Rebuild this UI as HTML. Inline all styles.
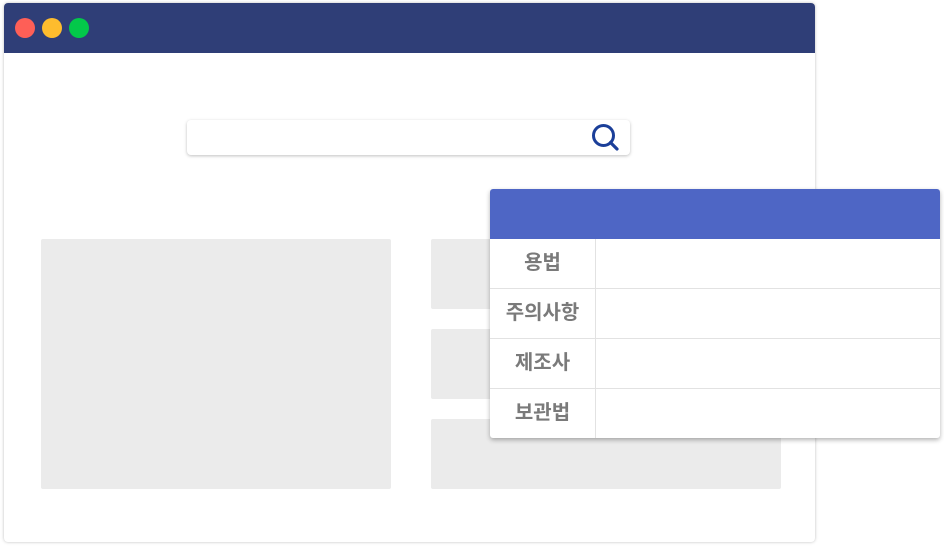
<!DOCTYPE html><html><head><meta charset="utf-8"><style>
body{margin:0;width:944px;height:547px;background:#fff;position:relative;overflow:hidden;font-family:"Liberation Sans","Noto Sans CJK KR",sans-serif}
.a{position:absolute}
.win{left:4px;top:3px;width:811px;height:539px;background:#fff;border-radius:4px;box-shadow:0 0 3px rgba(0,0,0,.25);overflow:hidden}
.hd{left:0;top:0;width:811px;height:50px;background:#2f3e77}
.dot{width:20px;height:20px;border-radius:50%;top:15px}
.g{background:#ebebeb;border-radius:2px}
.panel{left:490px;top:189px;width:450px;height:249px;background:#fff;border-radius:3px;box-shadow:0 2px 5px rgba(0,0,0,.3);overflow:hidden}
.ph{left:0;top:0;width:450px;height:50px;background:#4e66c5}
.row{left:0;width:450px;height:49px;border-top:1px solid #e2e2e2}
.lab{position:absolute;left:0;width:105px;height:49px;line-height:49px;text-align:center;border-right:1px solid #e2e2e2;font-weight:bold;font-size:20px;color:#7a7a7a}
</style></head><body>
<div class="a win">
<div class="a hd"></div>
<div class="a dot" style="left:11px;background:#fe5f57"></div>
<div class="a dot" style="left:38px;background:#febc2e"></div>
<div class="a dot" style="left:65px;background:#03c84a"></div>
<div class="a" style="left:183px;top:117px;width:443px;height:35px;border-radius:4px;box-shadow:0 1px 3px rgba(0,0,0,.25);background:#fff"></div>
<svg class="a" style="left:585px;top:118px" width="34" height="34"><circle cx="14.5" cy="14.5" r="10" fill="none" stroke="#1b3f99" stroke-width="3"/><line x1="21.5" y1="21.5" x2="28" y2="28" stroke="#1b3f99" stroke-width="3.2" stroke-linecap="round"/></svg>
<div class="a g" style="left:37px;top:236px;width:350px;height:250px"></div>
<div class="a g" style="left:427px;top:236px;width:350px;height:70px"></div>
<div class="a g" style="left:427px;top:326px;width:350px;height:70px"></div>
<div class="a g" style="left:427px;top:416px;width:350px;height:70px"></div>
</div>
<div class="a panel">
<div class="a ph"></div>
<div class="a row" style="top:50px;border-top:none"><div class="lab" style="top:0">용법</div></div>
<div class="a row" style="top:99px"><div class="lab">주의사항</div></div>
<div class="a row" style="top:149px"><div class="lab">제조사</div></div>
<div class="a row" style="top:199px"><div class="lab">보관법</div></div>
</div>
</body></html>
